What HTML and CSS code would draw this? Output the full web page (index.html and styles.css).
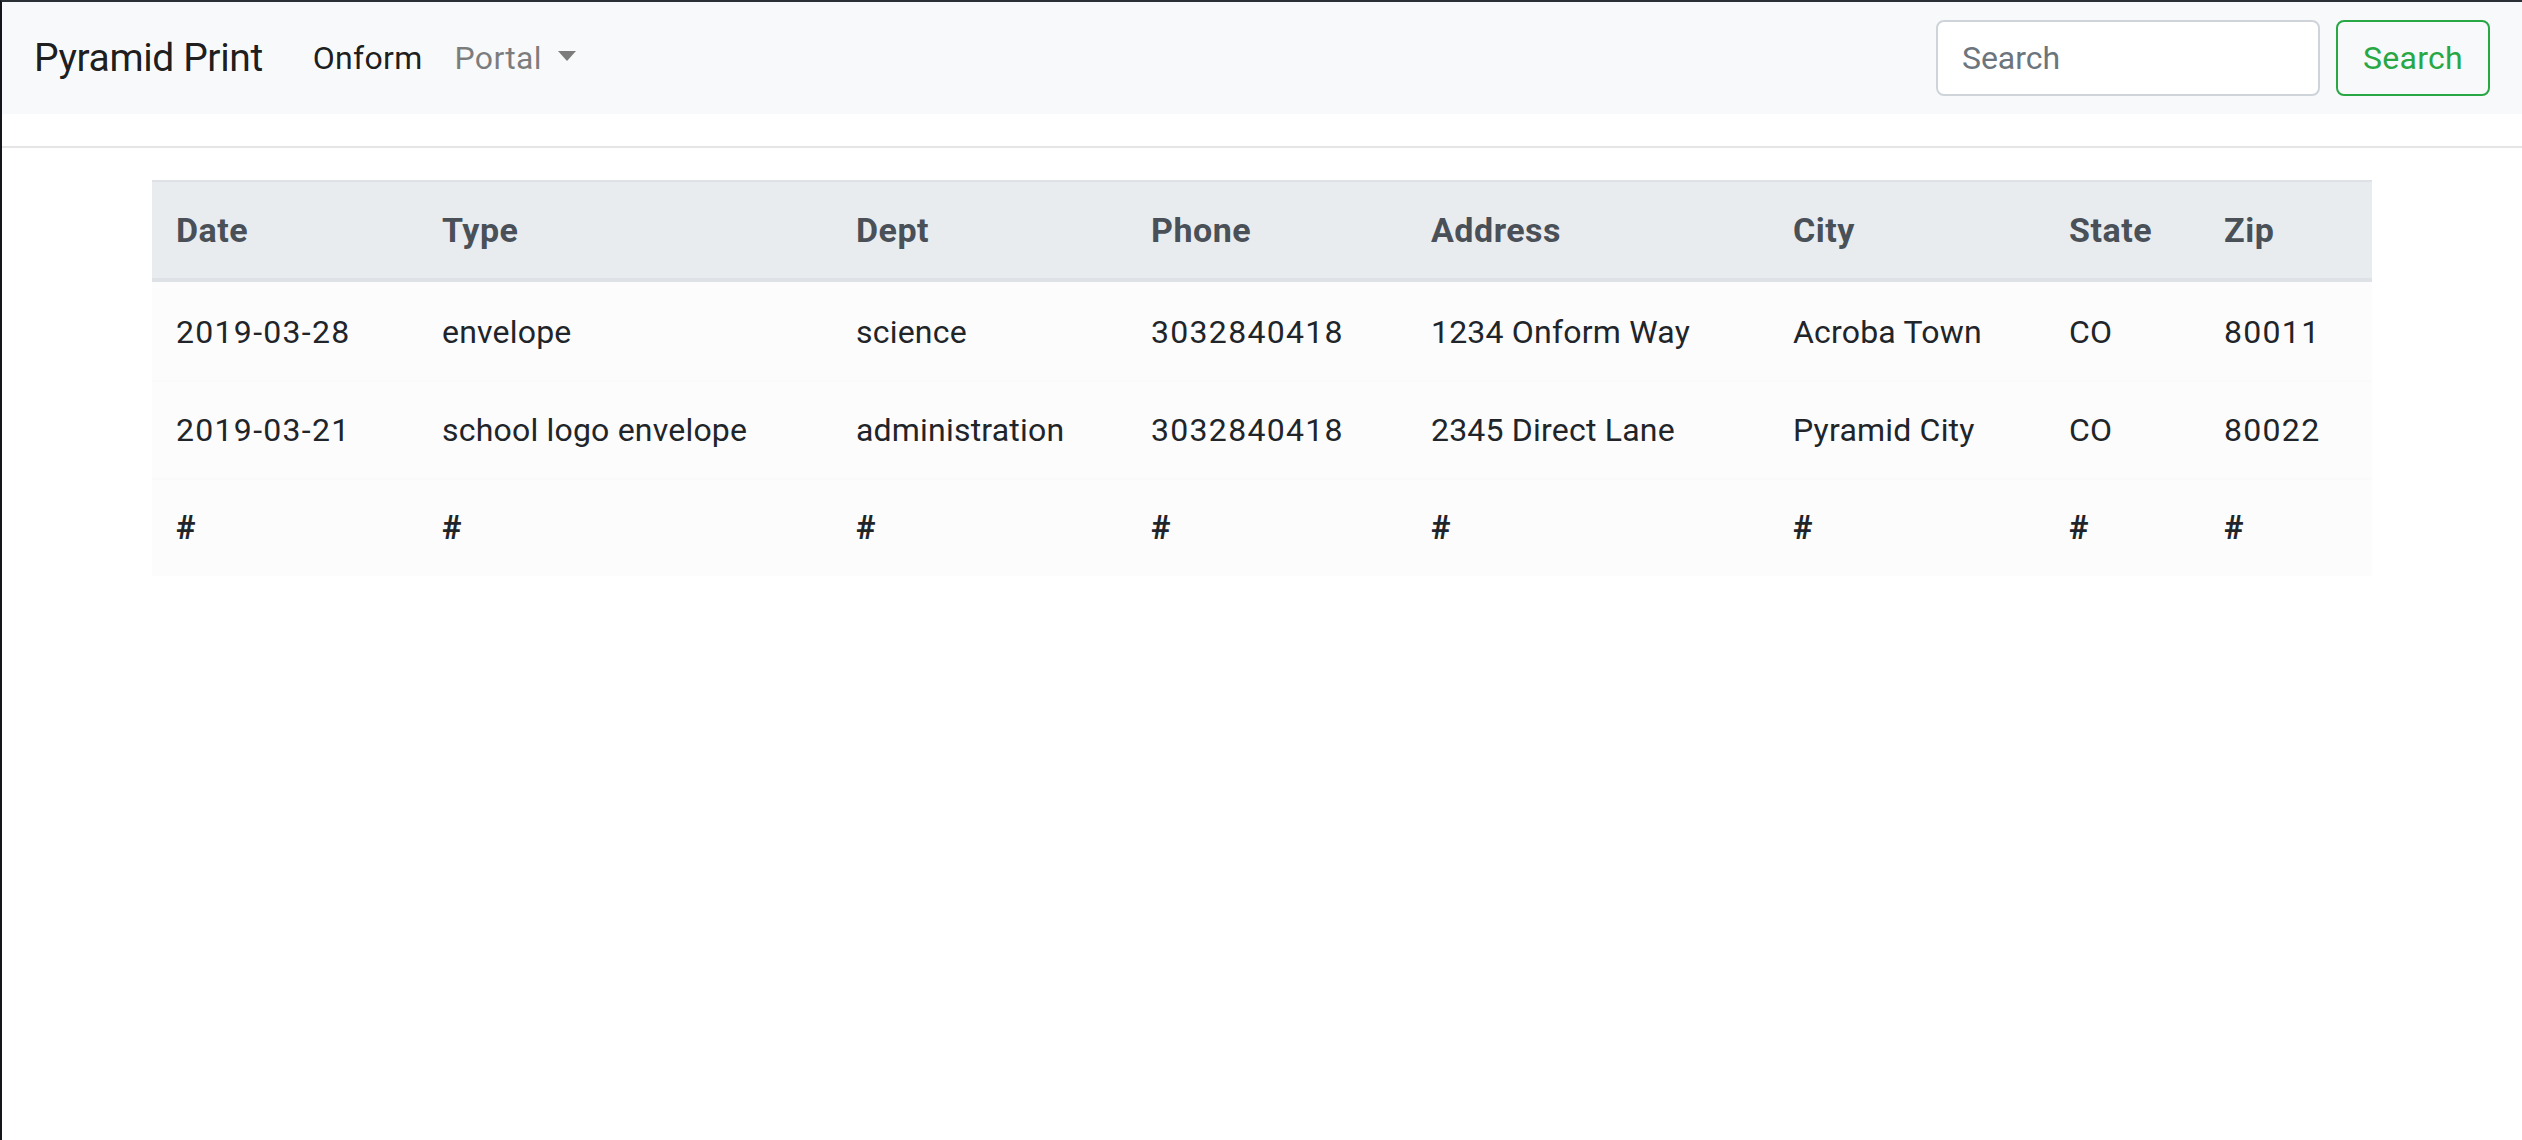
FILE: index.html
```html
<!DOCTYPE html>
<html lang="en">
<head>
<meta charset="utf-8">
<title>Pyramid Print</title>
<link rel="stylesheet" href="styles.css">
</head>
<body>
<div class="frame">
  <nav class="navbar">
    <a class="brand" href="#">Pyramid Print</a>
    <ul class="nav">
      <li><a class="nav-link active" href="#">Onform</a></li>
      <li><a class="nav-link muted" href="#">Portal<span class="caret"></span></a></li>
    </ul>
    <form class="search-form">
      <input class="search-input" type="search" placeholder="Search">
      <button class="search-btn" type="button">Search</button>
    </form>
  </nav>
  <hr class="divider">
  <div class="container">
    <table class="data-table">
      <colgroup>
        <col class="c-date"><col class="c-type"><col class="c-dept"><col class="c-phone">
        <col class="c-address"><col class="c-city"><col class="c-state"><col class="c-zip">
      </colgroup>
      <thead>
        <tr>
          <th>Date</th><th>Type</th><th>Dept</th><th>Phone</th>
          <th>Address</th><th>City</th><th>State</th><th>Zip</th>
        </tr>
      </thead>
      <tbody>
        <tr>
          <td class="num">2019-03-28</td><td>envelope</td><td>science</td><td class="num">3032840418</td>
          <td>1234 Onform Way</td><td>Acroba Town</td><td>CO</td><td class="num">80011</td>
        </tr>
        <tr>
          <td class="num">2019-03-21</td><td>school logo envelope</td><td>administration</td><td class="num">3032840418</td>
          <td>2345 Direct Lane</td><td>Pyramid City</td><td>CO</td><td class="num">80022</td>
        </tr>
        <tr class="hash-row">
          <th>#</th><th>#</th><th>#</th><th>#</th>
          <th>#</th><th>#</th><th>#</th><th>#</th>
        </tr>
      </tbody>
    </table>
  </div>
</div>
</body>
</html>
```

FILE: styles.css
```css
* { box-sizing: border-box; }

html, body {
  margin: 0;
  padding: 0;
  background: #ffffff;
}

body {
  font-family: Roboto, "Liberation Sans", Arial, sans-serif;
  font-size: 32px;
  line-height: 48px;
  color: #212529;
}

.frame {
  min-height: 1140px;
  border-top: 2px solid #2b2f36;
  border-left: 2px solid #14161c;
}

.navbar {
  display: flex;
  align-items: center;
  height: 112px;
  padding: 16px 32px;
  background: #f8f9fa;
}

.brand {
  font-size: 39px;
  letter-spacing: -0.4px;
  line-height: 60px;
  padding: 10px 0;
  margin-right: 34px;
  color: rgba(0, 0, 0, 0.9);
  text-decoration: none;
  white-space: nowrap;
}

.nav {
  display: flex;
  list-style: none;
  margin: 0;
  padding: 0;
}

.nav-link {
  display: block;
  padding: 16px;
  text-decoration: none;
  white-space: nowrap;
  letter-spacing: 0.3px;
}

.nav-link.active { color: rgba(0, 0, 0, 0.9); }
.nav-link.muted { color: rgba(0, 0, 0, 0.5); }

.caret {
  display: inline-block;
  margin-left: 16px;
  vertical-align: 8px;
  border-top: 10px solid rgba(0, 0, 0, 0.5);
  border-left: 9px solid transparent;
  border-right: 9px solid transparent;
}

.search-form {
  margin-left: auto;
  display: flex;
  align-items: center;
}

.search-input {
  width: 384px;
  height: 76px;
  margin-right: 16px;
  padding: 12px 24px;
  font-family: inherit;
  font-size: 32px;
  color: #495057;
  background: #ffffff;
  border: 2px solid #ced4da;
  border-radius: 8px;
  outline: none;
}

.search-input::placeholder { color: #6c757d; }

.search-btn {
  height: 76px;
  padding: 12px 25px;
  font-family: inherit;
  font-size: 32px;
  line-height: 48px;
  letter-spacing: 0.3px;
  color: #28a745;
  background: transparent;
  border: 2px solid #28a745;
  border-radius: 8px;
}

.divider {
  margin: 32px 0;
  height: 0;
  border: 0;
  border-top: 2px solid rgba(0, 0, 0, 0.1);
}

.container {
  max-width: 2280px;
  margin: 0 auto;
  padding: 0 30px;
}

.data-table {
  width: 100%;
  table-layout: fixed;
  border-collapse: separate;
  border-spacing: 0;
}

.c-date { width: 266px; }
.c-type { width: 414px; }
.c-dept { width: 295px; }
.c-phone { width: 280px; }
.c-address { width: 362px; }
.c-city { width: 276px; }
.c-state { width: 155px; }
.c-zip { width: 172px; }

.data-table th,
.data-table td {
  padding: 24px;
  text-align: left;
  vertical-align: top;
  white-space: nowrap;
  line-height: 48px;
  letter-spacing: 0.2px;
}

.data-table td.num { letter-spacing: 1.3px; }

.data-table thead th {
  background: #e9ecef;
  color: #495057;
  font-size: 34px;
  font-weight: 700;
  letter-spacing: 0.5px;
  border-top: 2px solid #dee2e6;
  border-bottom: 4px solid #dee2e6;
}

.data-table tbody td,
.data-table tbody th {
  background: #fcfcfc;
  border-top: 2px solid #fafafa;
}

.data-table tbody tr:first-child td { border-top-color: #fcfcfc; }

.hash-row th {
  font-size: 33px;
  font-weight: 700;
  color: #212529;
}
```
